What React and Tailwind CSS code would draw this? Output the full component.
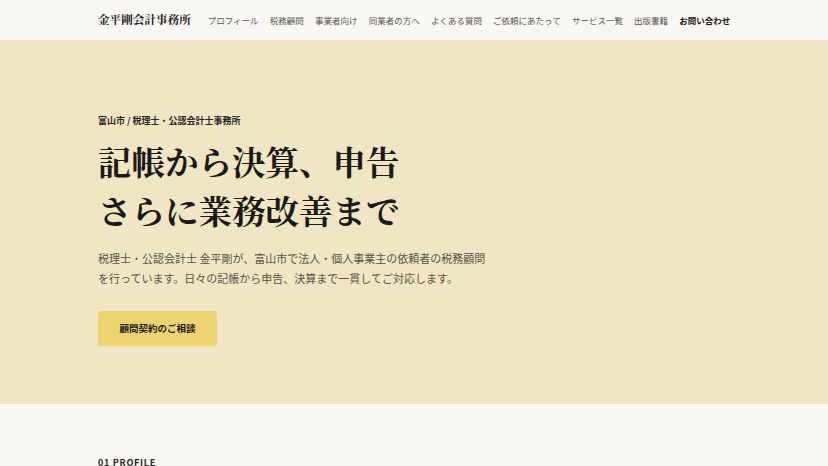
export default function App() {
  const nav = ["プロフィール", "税務顧問", "事業者向け", "同業者の方へ", "よくある質問", "ご依頼にあたって", "サービス一覧", "出版書籍"];
  const sans = { fontFamily: '"Noto Sans CJK JP", "Noto Sans", sans-serif' };
  return (
    <div className="w-full min-h-[466px] bg-[#f8f7f3] text-[#1f1d1a]" style={sans}>
      <header className="h-[41px] bg-[#f8f7f3] border-b border-[#ece8dc] flex items-center px-[98px] whitespace-nowrap">
        <div className="shrink-0 text-[11.6px] font-bold text-[#1c1a17] [font-family:'Noto_Serif_CJK_JP','Noto_Serif_JP',serif]">金平剛会計事務所</div>
        <nav className="ml-[17px] flex items-center gap-[11.2px] text-[8.5px] text-[#5a5650]">
          {nav.map((n) => (
            <span key={n} className="shrink-0">{n}</span>
          ))}
          <span className="shrink-0 font-bold text-[#1c1a17]">お問い合わせ</span>
        </nav>
      </header>
      <section className="h-[363px] bg-[#f1e6c3] px-[98px] pt-[73px]">
        <p className="text-[9px] font-bold text-[#2a2824] leading-[14px]">富山市 / 税理士・公認会計士事務所</p>
        <h1 className="mt-[8px] text-[33.5px] font-bold leading-[49px] text-[#1c1a17] [font-family:'Noto_Serif_CJK_JP','Noto_Serif_JP',serif]">
          記帳から決算、申告
          <br />
          さらに業務改善まで
        </h1>
        <p className="mt-[14px] w-[392px] text-[11px] leading-[20px] text-[#57534c]">
          税理士・公認会計士 金平剛が、富山市で法人・個人事業主の依頼者の税務顧問を行っています。日々の記帳から申告、決算まで一貫してご対応します。
        </p>
        <button className="mt-[23px] w-[119px] h-[35px] rounded-[2px] bg-[#ecd571] text-[9.5px] font-bold text-[#1c1a17]">
          顧問契約のご相談
        </button>
      </section>
      <section className="px-[98px] pt-[52px]">
        <p className="text-[9px] font-bold tracking-[0.08em] text-[#2a2824]">01 PROFILE</p>
      </section>
    </div>
  );
}
